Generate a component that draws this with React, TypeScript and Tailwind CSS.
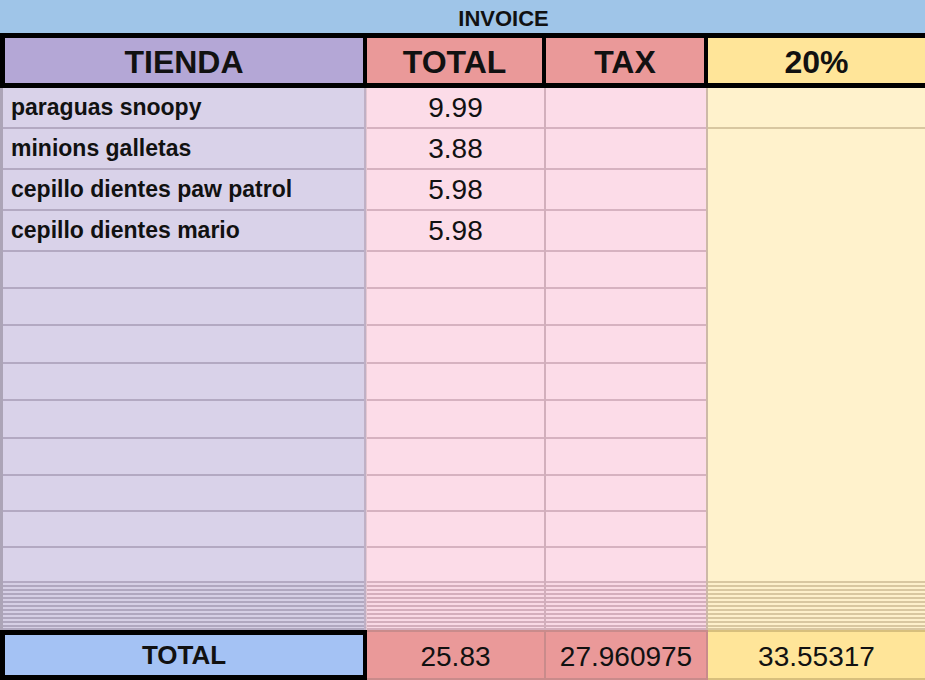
import React from "react";

const rows = [
  { name: "paraguas snoopy", total: "9.99" },
  { name: "minions galletas", total: "3.88" },
  { name: "cepillo dientes paw patrol", total: "5.98" },
  { name: "cepillo dientes mario", total: "5.98" },
];

const heights = [
  "h-[41px]",
  "h-[41px]",
  "h-[41px]",
  "h-[41px]",
  "h-[37px]",
  "h-[37px]",
  "h-[38px]",
  "h-[37px]",
  "h-[38px]",
  "h-[37px]",
  "h-[36px]",
  "h-[36px]",
  "h-[35px]",
];

const stripeHeights = [
  "h-[4px]",
  "h-[4px]",
  "h-[4px]",
  "h-[4px]",
  "h-[4px]",
  "h-[4px]",
  "h-[4px]",
  "h-[4px]",
  "h-[4px]",
  "h-[4px]",
  "h-[4px]",
  "h-[3px]",
];

function Stripes({ line }: { line: string }) {
  return (
    <>
      {stripeHeights.map((h, i) => (
        <div key={i} className={`${h} border-b-[2px] ${line}`} />
      ))}
    </>
  );
}

export default function App() {
  return (
    <div className="w-[925px] h-[680px] overflow-hidden bg-white font-['Liberation_Sans',Arial,sans-serif] text-[#111]">
      {/* Title bar */}
      <div className="h-[33px] bg-[#9fc5e8] flex items-center justify-center pl-[82px] pt-[5px]">
        <span className="text-[22px] leading-none font-bold">INVOICE</span>
      </div>

      {/* Header row */}
      <div className="flex h-[55px] border-y-[5px] border-black">
        <div className="w-[367px] shrink-0 border-l-[5px] border-r-[4px] border-black bg-[#b4a7d6] flex items-center justify-center pt-[2px]">
          <span className="text-[32px] leading-none font-bold">TIENDA</span>
        </div>
        <div className="w-[179px] shrink-0 border-r-[4px] border-black bg-[#ea9999] flex items-center justify-center pt-[2px]">
          <span className="text-[32px] leading-none font-bold">TOTAL</span>
        </div>
        <div className="w-[162px] shrink-0 border-r-[4px] border-black bg-[#ea9999] flex items-center justify-center pt-[2px]">
          <span className="text-[32px] leading-none font-bold">TAX</span>
        </div>
        <div className="flex-1 bg-[#ffe599] flex items-center justify-center pt-[2px]">
          <span className="text-[32px] leading-none font-bold">20%</span>
        </div>
      </div>

      {/* Data rows */}
      <div className="flex">
        <div className="w-[366px] shrink-0 flex flex-col border-l-[3px] border-l-[#aca4b7] border-r-[2px] border-r-[#bfb0c5] bg-[#d9d2e9]">
          {heights.map((h, i) => (
            <div key={i} className={`${h} border-b-[2px] border-[#b3a9c2] flex items-center pl-2`}>
              {rows[i] && (
                <span className="text-[23px] leading-none font-bold whitespace-nowrap">{rows[i].name}</span>
              )}
            </div>
          ))}
        </div>
        <div className="w-[180px] shrink-0 flex flex-col border-l border-l-[#e3c6d1] border-r-[2px] border-[#d2afbc] bg-[#fcdce8]">
          {heights.map((h, i) => (
            <div key={i} className={`${h} border-b-[2px] border-[#d6b2c0] flex items-center justify-center`}>
              {rows[i] && <span className="text-[28px] leading-none">{rows[i].total}</span>}
            </div>
          ))}
        </div>
        <div className="w-[162px] shrink-0 flex flex-col border-r-[2px] border-[#cdb9a7] bg-[#fcdce8]">
          {heights.map((h, i) => (
            <div key={i} className={`${h} border-b-[2px] border-[#d6b2c0]`} />
          ))}
        </div>
        <div className="flex-1 flex flex-col bg-[#fff2cc]">
          <div className="h-[41px] border-b-[2px] border-[#d8c7a0]" />
          <div className="h-[454px] border-b-[2px] border-[#d8c7a0]" />
        </div>
      </div>

      {/* Hidden (collapsed) rows */}
      <div className="flex">
        <div className="w-[366px] shrink-0 flex flex-col border-l-[3px] border-l-[#aca4b7] border-r-[2px] border-r-[#bfb0c5] bg-[#d6cfe5]">
          <Stripes line="border-[#b0a7bf]" />
        </div>
        <div className="w-[180px] shrink-0 flex flex-col border-l border-l-[#e3c6d1] border-r-[2px] border-[#d2afbc] bg-[#f9d9e5]">
          <Stripes line="border-[#d4aebc]" />
        </div>
        <div className="w-[162px] shrink-0 flex flex-col border-r-[2px] border-[#cdb9a7] bg-[#f9d9e5]">
          <Stripes line="border-[#d4aebc]" />
        </div>
        <div className="flex-1 flex flex-col bg-[#fdf0cb]">
          <Stripes line="border-[#d8c7a0]" />
        </div>
      </div>

      {/* Total row */}
      <div className="flex h-[50px]">
        <div className="w-[367px] shrink-0 border-[5px] border-r-[4px] border-black bg-[#a4c2f4] flex items-center justify-center">
          <span className="text-[26px] leading-none font-bold">TOTAL</span>
        </div>
        <div className="w-[179px] shrink-0 border-y-[2px] border-r-[2px] border-[#c98b8b] bg-[#ea9999] flex items-center justify-center pt-[4px]">
          <span className="text-[28px] leading-none">25.83</span>
        </div>
        <div className="w-[162px] shrink-0 border-y-[2px] border-r-[2px] border-[#c98b8b] bg-[#ea9999] flex items-center justify-center pt-[4px]">
          <span className="text-[28px] leading-none">27.960975</span>
        </div>
        <div className="flex-1 border-y-[2px] border-[#d8bf7c] bg-[#ffe599] flex items-center justify-center pt-[4px]">
          <span className="text-[28px] leading-none">33.55317</span>
        </div>
      </div>
    </div>
  );
}
